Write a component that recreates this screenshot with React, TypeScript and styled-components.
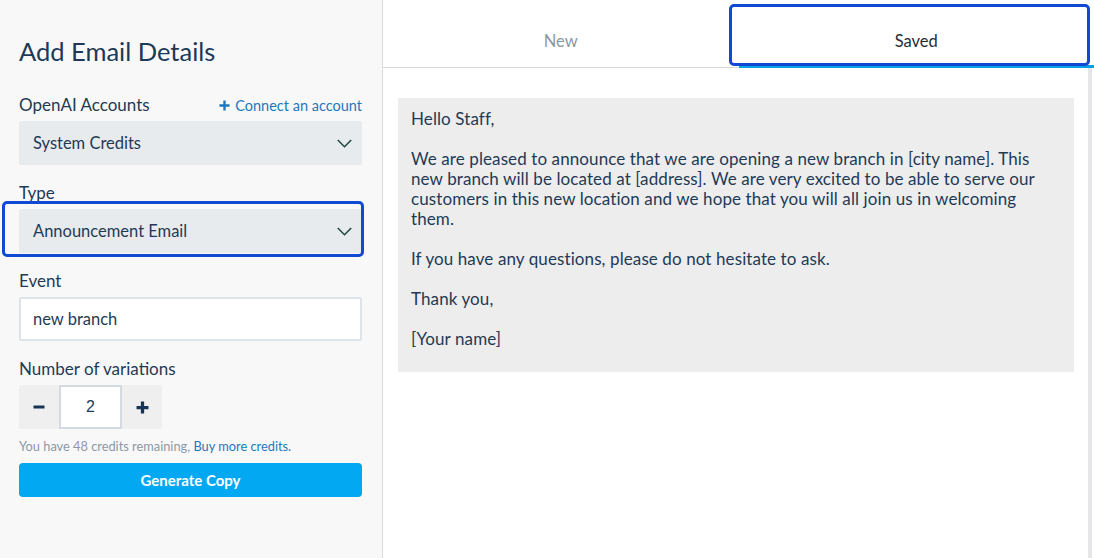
import React from "react";
import styled, { createGlobalStyle } from "styled-components";

const GlobalStyle = createGlobalStyle`
  html, body {
    margin: 0;
    padding: 0;
    background: #ffffff;
    font-family: Lato, "Open Sans", Arial, sans-serif;
  }
  * {
    box-sizing: border-box;
  }
`;

const Layout = styled.div`
  display: flex;
  width: 1094px;
  height: 558px;
  overflow: hidden;
`;

const LeftSide = styled.div`
  width: 383px;
  flex-shrink: 0;
  background: #f8f8f8;
  border-right: 1px solid #dcdcdc;
  padding: 36px 20px 0 19px;
  color: #1f3a56;
`;

const Title = styled.h1`
  margin: 0 0 29px;
  font-size: 25.5px;
  line-height: 30px;
  font-weight: 400;
  color: #1c3a58;
`;

const Field = styled.div`
  margin-bottom: 18px;
`;

const LabelRow = styled.div`
  display: flex;
  justify-content: space-between;
  align-items: center;
  margin-bottom: 6px;
`;

const Label = styled.div`
  font-size: 17px;
  line-height: 20px;
  color: #1f3a56;
`;

const ConnectLink = styled.a`
  display: flex;
  align-items: center;
  gap: 5px;
  font-size: 14.5px;
  color: #1d78bd;
  text-decoration: none;
`;

const SelectBox = styled.div<{ $focused?: boolean }>`
  position: relative;
  display: flex;
  align-items: center;
  justify-content: space-between;
  height: 44px;
  padding: 0 10px 0 14px;
  background: #e7ebee;
  border-radius: 2px;
  font-size: 16.5px;
  color: #1f3a56;

  &::after {
    content: "";
    display: ${(p) => (p.$focused ? "block" : "none")};
    position: absolute;
    top: -8px;
    left: -17px;
    right: -2px;
    bottom: -4px;
    border: 3px solid #1148d4;
    border-radius: 5px;
  }
`;

const TextInput = styled.div`
  display: flex;
  align-items: center;
  height: 44px;
  padding: 0 12px;
  background: #ffffff;
  border: 2px solid #dde3e8;
  border-radius: 2px;
  font-size: 16.5px;
  color: #1f3a56;
`;

const Stepper = styled.div`
  display: flex;
  align-items: center;
  width: 143px;
  height: 44px;
  background: #efefef;
  border-radius: 2px;
`;

const StepButton = styled.div`
  width: 40px;
  display: flex;
  justify-content: center;
  align-items: center;
  color: #163555;
`;

const StepValue = styled.div`
  width: 63px;
  height: 44px;
  display: flex;
  align-items: center;
  justify-content: center;
  background: #ffffff;
  border: 2px solid #d3dae1;
  font-family: "Liberation Sans", Arial, sans-serif;
  font-size: 16px;
  color: #1f3a56;
`;

const Credits = styled.div`
  margin: 9px 0 9px;
  font-size: 12.8px;
  line-height: 16px;
  color: #8c99a4;

  a {
    color: #2378b8;
    text-decoration: none;
  }
`;

const GenerateButton = styled.button`
  display: block;
  width: 100%;
  height: 34px;
  border: none;
  border-radius: 4px;
  background: #02a8f1;
  color: #ffffff;
  font-family: Lato, Arial, sans-serif;
  font-size: 15px;
  font-weight: 700;
`;

const RightSide = styled.div`
  flex: 1;
  display: flex;
  flex-direction: column;
  background: #ffffff;
`;

const Tabs = styled.div`
  display: flex;
  height: 68px;
  border-bottom: 1px solid #d9d9d9;
`;

const Tab = styled.div<{ $active?: boolean }>`
  position: relative;
  flex: 1;
  display: flex;
  align-items: center;
  justify-content: center;
  padding-top: 17px;
  font-size: 16.5px;
  color: ${(p) => (p.$active ? "#1f2d3a" : "#8a98a3")};
  border-bottom: 3px solid ${(p) => (p.$active ? "#06a3e6" : "transparent")};
  margin-bottom: -1px;

  &::after {
    content: "";
    display: ${(p) => (p.$active ? "block" : "none")};
    position: absolute;
    top: 4px;
    left: -10px;
    right: 4px;
    bottom: -1px;
    border: 3px solid #1148d4;
    border-radius: 5px;
  }
`;

const Body = styled.div`
  flex: 1;
  display: flex;
`;

const Content = styled.div`
  flex: 1;
  padding: 30px 14px 0 15px;
`;

const ScrollTrack = styled.div`
  width: 4px;
  margin-right: 2px;
  background: #e6e6e8;
`;

const EmailBox = styled.div`
  background: #ededed;
  padding: 11px 12px 23px 13px;
  font-size: 17px;
  line-height: 20px;
  color: #1f3a56;
  letter-spacing: 0.1px;
  white-space: pre-line;
`;

const Chevron = () => (
  <svg width="15" height="9" viewBox="0 0 15 9" fill="none">
    <path d="M0.8 1 L7.5 7.7 L14.2 1" stroke="#1f4a3f" strokeWidth="1.6" />
  </svg>
);

const Plus = ({ size, stroke }: { size: number; stroke: number }) => (
  <svg width={size} height={size} viewBox="0 0 12 12">
    <path d="M6 0.5 V11.5 M0.5 6 H11.5" stroke="currentColor" strokeWidth={stroke} />
  </svg>
);

const Minus = () => (
  <svg width="12" height="12" viewBox="0 0 12 12">
    <path d="M0.5 6 H11.5" stroke="currentColor" strokeWidth="3" />
  </svg>
);

const email = `Hello Staff,

We are pleased to announce that we are opening a new branch in [city name]. This
new branch will be located at [address]. We are very excited to be able to serve our
customers in this new location and we hope that you will all join us in welcoming
them.

If you have any questions, please do not hesitate to ask.

Thank you,

[Your name]`;

const App: React.FC = () => {
  return (
    <>
      <GlobalStyle />
      <Layout>
        <LeftSide>
          <Title>Add Email Details</Title>

          <Field>
            <LabelRow>
              <Label>OpenAI Accounts</Label>
              <ConnectLink href="#">
                <Plus size={11} stroke={2.6} />
                Connect an account
              </ConnectLink>
            </LabelRow>
            <SelectBox>
              System Credits
              <Chevron />
            </SelectBox>
          </Field>

          <Field>
            <LabelRow>
              <Label>Type</Label>
            </LabelRow>
            <SelectBox $focused>
              Announcement Email
              <Chevron />
            </SelectBox>
          </Field>

          <Field>
            <LabelRow>
              <Label>Event</Label>
            </LabelRow>
            <TextInput>new branch</TextInput>
          </Field>

          <div>
            <LabelRow>
              <Label>Number of variations</Label>
            </LabelRow>
            <Stepper>
              <StepButton>
                <Minus />
              </StepButton>
              <StepValue>2</StepValue>
              <StepButton>
                <Plus size={13} stroke={3} />
              </StepButton>
            </Stepper>
          </div>

          <Credits>
            You have 48 credits remaining, <a href="#">Buy more credits.</a>
          </Credits>

          <GenerateButton>Generate Copy</GenerateButton>
        </LeftSide>

        <RightSide>
          <Tabs>
            <Tab>New</Tab>
            <Tab $active>Saved</Tab>
          </Tabs>
          <Body>
            <Content>
              <EmailBox>{email}</EmailBox>
            </Content>
            <ScrollTrack />
          </Body>
        </RightSide>
      </Layout>
    </>
  );
};

export default App;
